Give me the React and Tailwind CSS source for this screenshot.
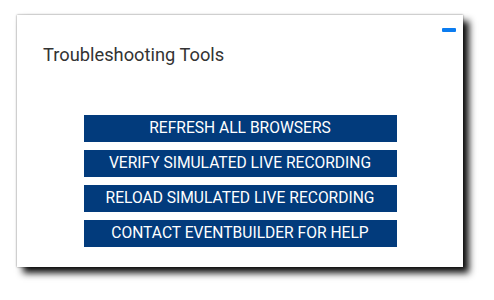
export default function App() {
  const buttons = [
    "REFRESH ALL BROWSERS",
    "VERIFY SIMULATED LIVE RECORDING",
    "RELOAD SIMULATED LIVE RECORDING",
    "CONTACT EVENTBUILDER FOR HELP",
  ];
  return (
    <div className="w-[494px] h-[300px] bg-white pl-[17px] pt-[15px]" style={{ fontFamily: "Roboto, 'Liberation Sans', sans-serif" }}>
      <div className="relative w-[446px] h-[252px] bg-white shadow-[0_0_2px_rgba(0,0,0,0.5),6px_6px_7px_rgba(0,0,0,0.95)]">
        <div className="absolute left-[425px] top-[13px] w-[14px] h-[4px] rounded-[1px] bg-[#0b7cf0]" />
        <div className="pt-[26px] pl-[26px] text-[18.3px] leading-[27px] text-[#333333]">Troubleshooting Tools</div>
        <div className="mt-[47px] flex flex-col items-center gap-[8px]">
          {buttons.map((b) => (
            <div key={b} className="w-[313px] h-[27px] bg-[#023b7c] text-white text-[15.6px] flex items-center justify-center">
              {b}
            </div>
          ))}
        </div>
      </div>
    </div>
  );
}
